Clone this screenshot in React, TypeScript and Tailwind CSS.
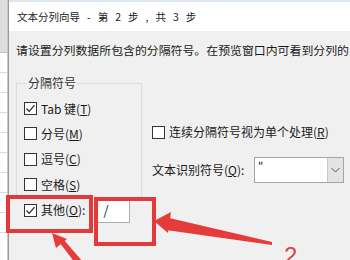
import React from "react";

function Box({ checked }: { checked?: boolean }) {
  return (
    <div className="w-[13px] h-[13px] shrink-0 border border-[#333333] bg-white flex items-center justify-center">
      {checked && (
        <svg width="11" height="11" viewBox="0 0 11 11">
          <path d="M1.5 5.5 L4.2 8.3 L9.5 2.2" fill="none" stroke="#222" strokeWidth="1.2" />
        </svg>
      )}
    </div>
  );
}

function Row({ checked, label, k }: { checked?: boolean; label: string; k: string }) {
  return (
    <div className="h-[25.3px] flex items-center gap-[4px]">
      <Box checked={checked} />
      <span className="text-[12px] leading-[16px] text-[#1a1a1a] whitespace-nowrap">
        {label}(<span className="underline">{k}</span>)
      </span>
    </div>
  );
}

export default function App() {
  return (
    <div className="relative w-[350px] h-[260px] overflow-hidden flex bg-white font-['Noto_Sans_CJK_SC','Noto_Sans',sans-serif] text-[#1a1a1a]">
      {/* excel sheet behind */}
      <div className="w-[8px] shrink-0 flex flex-col border-r border-[#c8c8c8]">
        <div className="h-[53px] shrink-0 bg-[#dedede] border-b border-[#c6c6c6]" />
        <div className="h-[20px] shrink-0 border-b border-[#dadada]" />
        <div className="h-[20px] shrink-0 border-b border-[#dadada]" />
        <div className="h-[20px] shrink-0 border-b border-[#dadada]" />
        <div className="h-[20px] shrink-0 border-b border-[#dadada]" />
        <div className="h-[20px] shrink-0 border-b border-[#dadada]" />
        <div className="h-[20px] shrink-0 border-b border-[#dadada]" />
        <div className="h-[20px] shrink-0 border-b border-[#dadada]" />
        <div className="h-[20px] shrink-0 border-b border-[#dadada]" />
        <div className="h-[20px] shrink-0 border-b border-[#dadada]" />
      </div>

      {/* dialog */}
      <div className="flex-1 min-w-0 flex flex-col border-l border-[#9a9a9a] overflow-hidden">
        <div className="h-[31px] shrink-0 bg-white border-t-2 border-[#dbe8f4] flex items-center gap-[7px] pl-[8px] text-[10.5px] leading-[16px] whitespace-nowrap">
          <span>文本分列向导</span>
          <span>-</span>
          <span>第</span>
          <span>2</span>
          <span>步</span>
          <span>,</span>
          <span>共</span>
          <span>3</span>
          <span>步</span>
        </div>
        <div className="flex-1 bg-[#f0f0f0] pl-[7px] pt-[11px]">
          <p className="text-[11.9px] leading-[16px] whitespace-nowrap">
            请设置分列数据所包含的分隔符号。在预览窗口内可看到分列的
          </p>
          <div className="flex mt-[17px]">
            <div className="w-[126px] shrink-0 flex flex-col">
              <fieldset className="h-[122px] border border-b-0 border-[#dcdcdc] pl-[7px]">
                <legend className="ml-[3px] px-[1px] text-[12px] leading-[16px] text-[#333]">分隔符号</legend>
                <div className="pt-[5px] flex flex-col">
                  <Row checked label="Tab 键" k="T" />
                  <Row label="分号" k="M" />
                  <Row label="逗号" k="C" />
                  <Row label="空格" k="S" />
                </div>
              </fieldset>
              <div className="h-[26px] flex items-center pl-[8px]">
                <div className="flex items-center gap-[4px]">
                  <Box checked />
                  <span className="text-[12px] leading-[16px] whitespace-nowrap">
                    其他(<span className="underline">O</span>):
                  </span>
                </div>
                <div className="ml-[9px] w-[36px] h-[25px] bg-white border border-[#adadad] pl-[8px] text-[13px] leading-[22px]">
                  /
                </div>
              </div>
            </div>

            <div className="flex-1 min-w-0 pl-[10px] pr-[6px] flex flex-col">
              <div className="mt-[49px] h-[16px] flex items-center gap-[4px]">
                <Box />
                <span className="text-[12px] leading-[16px] whitespace-nowrap">
                  连续分隔符号视为单个处理(<span className="underline">R</span>)
                </span>
              </div>
              <div className="mt-[17px] h-[26px] flex items-center justify-between">
                <span className="text-[12px] leading-[16px] whitespace-nowrap">
                  文本识别符号(<span className="underline">Q</span>):
                </span>
                <div className="w-[90px] h-[26px] shrink-0 flex border border-[#a5a5a5] bg-white">
                  <div className="flex-1 pl-[3px] text-[11px] leading-[14px]">"</div>
                  <div className="w-[16px] bg-[#e3e3e3] border-l border-[#c8c8c8] flex items-center justify-center">
                    <svg width="9" height="6" viewBox="0 0 9 6">
                      <path d="M0.5 1 L4.5 5 L8.5 1" fill="none" stroke="#555" strokeWidth="1" />
                    </svg>
                  </div>
                </div>
              </div>
            </div>
          </div>
        </div>
      </div>

      {/* annotations */}
      <div className="absolute left-[6px] top-[195px] w-[87px] h-[38px] border-4 border-[#e2393b]" />
      <div className="absolute left-[94px] top-[197px] w-[62px] h-[49px] border-4 border-[#e2393b]" />
      <svg className="absolute left-0 top-0" width="350" height="260" viewBox="0 0 350 260">
        <polygon points="52,233 67,239 56,248" fill="#e63b3b" />
        <polygon points="59,242 64,240 83,262 76,264" fill="#e63b3b" />
        <polygon points="154,221 171,212 168,233" fill="#e63b3b" />
        <polygon points="165,217 166,230 272,245 272,242" fill="#e63b3b" />
      </svg>
      <div className="absolute left-[284px] top-[242px] text-[24px] leading-[28px] text-[#d9443f] font-['Liberation_Sans',sans-serif] font-light">
        2
      </div>
    </div>
  );
}
